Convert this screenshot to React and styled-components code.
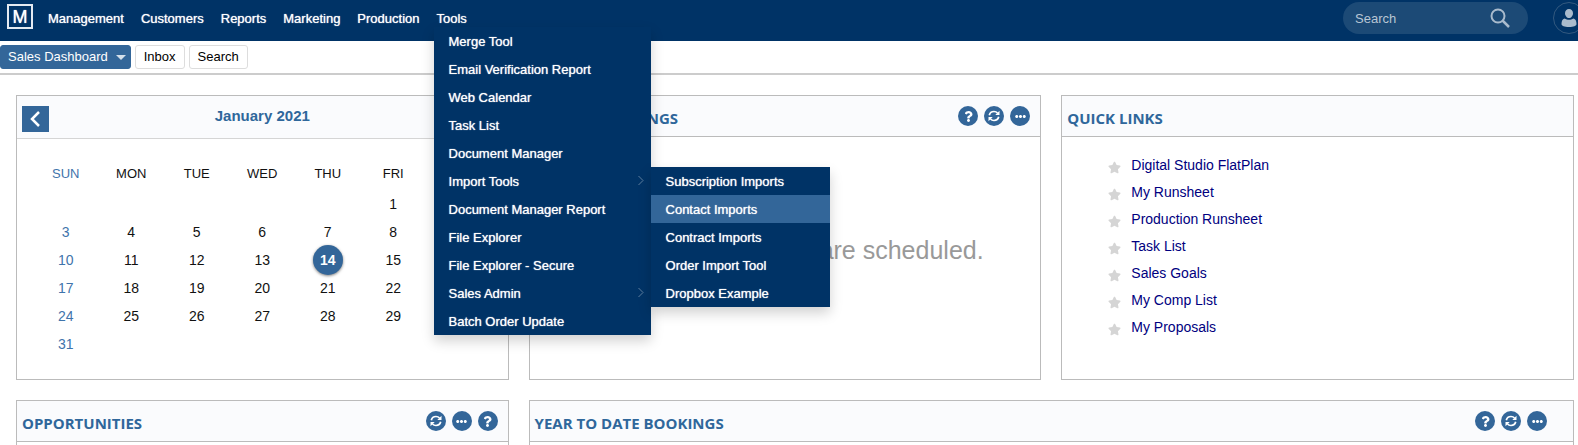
import styled, { createGlobalStyle } from "styled-components";
import { FaEllipsisH, FaQuestion, FaStar } from "react-icons/fa";

const GlobalStyle = createGlobalStyle`
  * {
    box-sizing: border-box;
  }

  body {
    margin: 0;
    overflow-x: hidden;
    background: #fff;
    color: #111;
    font-family: "Liberation Sans", Arial, sans-serif;
    font-size: 13px;
    line-height: 16px;
  }

  button,
  input {
    font: inherit;
  }

  ul {
    list-style: none;
    margin: 0;
    padding: 0;
  }
`;

const Header = styled.header`
  display: flex;
  height: 41px;
  padding-left: 7px;
  background: #003366;
`;

const Logo = styled.a`
  display: flex;
  align-items: center;
  justify-content: center;
  width: 26px;
  height: 25px;
  margin: 4px 7px 0 0;
  border: 2px solid #e4eaf1;
  color: #fff;
  font-size: 18px;
  text-decoration: none;
  text-shadow: 0 0 1px #fff;
`;

const NavList = styled.ul`
  display: flex;
  gap: 1px;
`;

const NavItem = styled.li`
  position: relative;
  margin: 0 6px;
  padding: 11px 2px 0;
`;

const NavLink = styled.a`
  color: #fff;
  text-decoration: none;
  text-shadow: 0 0 1px rgba(255, 255, 255, 0.9);
`;

const Menu = styled.ul`
  position: absolute;
  z-index: 10;
  top: ${({ $nested }) => ($nested ? "0" : "27px")};
  left: ${({ $nested }) => ($nested ? "100%" : "-1px")};
  width: ${({ $nested }) => ($nested ? "179px" : "217px")};
  background: #003366;
  box-shadow: 0 6px 12px rgba(0, 0, 0, 0.18);
`;

const MenuItem = styled.li`
  position: relative;
`;

const MenuLink = styled(NavLink)`
  display: flex;
  align-items: center;
  justify-content: space-between;
  height: 28px;
  padding: 2px 6px 0 15px;
  background: ${({ $active }) => ($active ? "#336699" : "transparent")};

  svg {
    margin-bottom: 2px;
  }
`;

const HeaderTools = styled.div`
  display: flex;
  gap: 25px;
  margin: 2px -7px 0 auto;
`;

const SearchForm = styled.form`
  display: flex;
  align-items: center;
  width: 185px;
  height: 32px;
  padding: 0 18px 0 12px;
  border-radius: 16px;
  background: #1c4a76;
`;

const SearchInput = styled.input`
  flex: 1;
  min-width: 0;
  padding: 1px 0 0;
  border: 0;
  outline: 0;
  background: transparent;
  color: #fff;

  &::placeholder {
    color: #b8c6d4;
    opacity: 1;
  }
`;

const PlainButton = styled.button`
  display: flex;
  padding: 0;
  border: 0;
  background: transparent;
`;

const Avatar = styled.button`
  display: flex;
  align-items: center;
  justify-content: center;
  width: 32px;
  height: 32px;
  padding: 0;
  border: 1px solid #33597f;
  border-radius: 50%;
  background: transparent;
`;

const Toolbar = styled.div`
  display: flex;
  gap: 4px;
  padding: 4px 0;
  border-bottom: 2px solid #ccc;
`;

const Tab = styled.button`
  display: flex;
  align-items: center;
  gap: 8px;
  height: 24px;
  padding: 0 8px;
  border: 1px solid #ddd;
  border-radius: 3px;
  background: #fff;
  color: #000;
`;

const ActiveTab = styled(Tab)`
  padding: 0 4px 0 7px;
  border-color: #336699;
  background: #336699;
  color: #fff;
`;

const Dashboard = styled.main`
  display: grid;
  grid-template-columns: minmax(0, 49fr) minmax(0, 51fr) minmax(0, 51fr);
  gap: 20px;
  padding: 20px 4px 0 16px;
`;

const Panel = styled.section`
  grid-column: span ${({ $span = 1 }) => $span};
  border: 1px solid #bbb;
  background: #fff;
`;

const PanelHeader = styled.div`
  display: flex;
  align-items: flex-start;
  justify-content: space-between;
  height: 41px;
  padding: 10px ${({ $inset = 10 }) => $inset}px 0 5px;
  border-bottom: 1px solid #bbb;
  background: #fafbfd;
`;

const PanelTitle = styled.h2`
  margin: 2px 0 0;
  color: #2f679b;
  font-family: "Open Sans", sans-serif;
  font-size: 15px;
  font-weight: 700;
  line-height: 20px;
`;

const Actions = styled.div`
  display: flex;
  gap: 6px;
`;

const ActionButton = styled.button`
  display: flex;
  align-items: center;
  justify-content: center;
  width: 20px;
  height: 20px;
  padding: 0;
  border: 0;
  border-radius: 50%;
  background: #336699;
  color: #fff;
`;

const CalendarHeader = styled.div`
  display: grid;
  grid-template-columns: 27px 1fr 27px;
  height: 43px;
  padding: 10px 5px 0;
  border-bottom: 1px solid #d5d5d5;
  background: #fafbfd;
`;

const MonthTitle = styled.h2`
  margin: 0;
  color: #2f679b;
  font-size: 15px;
  line-height: 20px;
  text-align: center;
`;

const MonthButton = styled.button`
  display: flex;
  align-items: center;
  justify-content: center;
  height: 26px;
  padding: 0;
  border: 0;
  background: #336699;
`;

const CalendarBody = styled.div`
  padding: 18px 16px 21px;
`;

const CalendarTable = styled.table`
  width: 100%;
  table-layout: fixed;
  border-collapse: collapse;
  text-align: center;
`;

const Weekday = styled.th`
  height: 33px;
  padding: 0;
  color: ${({ $sunday }) => ($sunday ? "#3f74ab" : "#111")};
  font-weight: 400;
`;

const Day = styled.td`
  height: 28px;
  padding: 0;
  color: ${({ $sunday }) => ($sunday ? "#3f74ab" : "#111")};
  font-size: 14px;
`;

const Today = styled.span`
  display: block;
  width: 30px;
  height: 30px;
  margin: -1px auto;
  border-radius: 50%;
  background: #336699;
  box-shadow: 0 1px 3px rgba(0, 0, 0, 0.5);
  color: #fff;
  font-weight: 700;
  line-height: 30px;
`;

const EmptyMessage = styled.p`
  margin: 0;
  padding-top: 97px;
  color: #999;
  font-size: 25px;
  line-height: 32px;
  text-align: center;
`;

const LinkList = styled.ul`
  padding: 14px 0 0 46px;
`;

const LinkItem = styled.li`
  display: flex;
  align-items: center;
  gap: 10px;
  height: 27px;

  svg {
    margin-top: 6px;
    color: #d5d5d5;
  }

  a {
    color: #000080;
    font-size: 14px;
    text-decoration: none;
  }
`;

const PanelBody = styled.div`
  height: 60px;
`;

const navItems = ["Management", "Customers", "Reports", "Marketing", "Production"];

const importTools = [
  "Subscription Imports",
  "Contact Imports",
  "Contract Imports",
  "Order Import Tool",
  "Dropbox Example",
];

const toolsMenu = [
  { label: "Merge Tool" },
  { label: "Email Verification Report" },
  { label: "Web Calendar" },
  { label: "Task List" },
  { label: "Document Manager" },
  { label: "Import Tools", hasMenu: true, children: importTools },
  { label: "Document Manager Report" },
  { label: "File Explorer" },
  { label: "File Explorer - Secure" },
  { label: "Sales Admin", hasMenu: true },
  { label: "Batch Order Update" },
];

const quickLinks = [
  "Digital Studio FlatPlan",
  "My Runsheet",
  "Production Runsheet",
  "Task List",
  "Sales Goals",
  "My Comp List",
  "My Proposals",
];

const weekdays = ["SUN", "MON", "TUE", "WED", "THU", "FRI", "SAT"];

const weeks = [
  ["", "", "", "", "", 1, 2],
  [3, 4, 5, 6, 7, 8, 9],
  [10, 11, 12, 13, 14, 15, 16],
  [17, 18, 19, 20, 21, 22, 23],
  [24, 25, 26, 27, 28, 29, 30],
  [31, "", "", "", "", "", ""],
];

function SubmenuArrow() {
  return (
    <svg width="8" height="12" viewBox="0 0 8 12" fill="none" stroke="#5f7f9f">
      <path d="M1.5 1 6 5.5 1.5 10" />
    </svg>
  );
}

function SearchIcon() {
  return (
    <svg width="20" height="20" viewBox="0 0 20 20" fill="none" stroke="#a9bbcd">
      <circle cx="8" cy="8" r="6.5" strokeWidth="2" />
      <path d="M12.5 12.5 19 19" strokeWidth="2.5" />
    </svg>
  );
}

function UserIcon() {
  return (
    <svg width="16" height="20" viewBox="0 0 16 20" fill="#a9bbcd">
      <path d="M8 1c2.4 0 4 1.7 4 4.2S10.200 10 8 10 4 7.700 4 5.200 5.600 1 8 1Z" />
      <path d="M3.500 10.500C5 11.500 6.500 11.800 8 11.800s3-.3 4.500-1.300C14.500 11 15.500 13 15.500 16c0 2-3 3-7.500 3S.5 18 .5 16c0-3 1-5 3-5.500Z" />
    </svg>
  );
}

function RefreshIcon() {
  return (
    <svg width="12" height="12" viewBox="0 0 12 12" fill="none" stroke="#fff" strokeWidth="1.7">
      <path d="M1.3 5.2C1.8 3 3.7 1.5 6 1.5c1.4 0 2.6.5 3.5 1.5M10.7 6.8C10.2 9 8.3 10.5 6 10.5 4.6 10.5 3.4 10 2.5 9" />
      <path d="M11.500.8v4.200H7.300ZM.5 11.200V7h4.200Z" fill="#fff" stroke="none" />
    </svg>
  );
}

const actionIcons = {
  Help: <FaQuestion size={11} />,
  Refresh: <RefreshIcon />,
  More: <FaEllipsisH size={11} />,
};

function PanelActions({ actions }) {
  return (
    <Actions>
      {actions.map((name) => (
        <ActionButton key={name} type="button" aria-label={name}>
          {actionIcons[name]}
        </ActionButton>
      ))}
    </Actions>
  );
}

function ToolsMenu() {
  return (
    <Menu>
      {toolsMenu.map(({ label, hasMenu, children }) => (
        <MenuItem key={label}>
          <MenuLink href="#">
            {label}
            {hasMenu && <SubmenuArrow />}
          </MenuLink>
          {children && (
            <Menu $nested>
              {children.map((child) => (
                <MenuItem key={child}>
                  <MenuLink href="#" $active={child === "Contact Imports"}>
                    {child}
                  </MenuLink>
                </MenuItem>
              ))}
            </Menu>
          )}
        </MenuItem>
      ))}
    </Menu>
  );
}

function Calendar() {
  return (
    <Panel>
      <CalendarHeader>
        <MonthButton type="button" aria-label="Previous month">
          <svg width="12" height="18" viewBox="0 0 12 18" fill="none" stroke="#fff" strokeWidth="2.5">
            <path d="M9 2 2 9l7 7" />
          </svg>
        </MonthButton>
        <MonthTitle>January 2021</MonthTitle>
        <MonthButton type="button" aria-label="Next month">
          <svg width="12" height="18" viewBox="0 0 12 18" fill="none" stroke="#fff" strokeWidth="2.5">
            <path d="m3 2 7 7-7 7" />
          </svg>
        </MonthButton>
      </CalendarHeader>
      <CalendarBody>
        <CalendarTable>
          <thead>
            <tr>
              {weekdays.map((name) => (
                <Weekday key={name} $sunday={name === "SUN"}>
                  {name}
                </Weekday>
              ))}
            </tr>
          </thead>
          <tbody>
            {weeks.map((week, row) => (
              <tr key={row}>
                {week.map((day, col) => (
                  <Day key={col} $sunday={col === 0}>
                    {day === 14 ? <Today>{day}</Today> : day}
                  </Day>
                ))}
              </tr>
            ))}
          </tbody>
        </CalendarTable>
      </CalendarBody>
    </Panel>
  );
}

function App() {
  return (
    <>
      <GlobalStyle />
      <Header>
        <Logo href="#">M</Logo>
        <nav>
          <NavList>
            {navItems.map((item) => (
              <NavItem key={item}>
                <NavLink href="#">{item}</NavLink>
              </NavItem>
            ))}
            <NavItem>
              <NavLink href="#">Tools</NavLink>
              <ToolsMenu />
            </NavItem>
          </NavList>
        </nav>
        <HeaderTools>
          <SearchForm>
            <SearchInput type="text" placeholder="Search" aria-label="Search" />
            <PlainButton type="button" aria-label="Submit search">
              <SearchIcon />
            </PlainButton>
          </SearchForm>
          <Avatar type="button" aria-label="Account">
            <UserIcon />
          </Avatar>
        </HeaderTools>
      </Header>
      <Toolbar>
        <ActiveTab type="button">
          Sales Dashboard
          <svg width="10" height="5" viewBox="0 0 10 5" fill="#d5e0eb">
            <path d="M0 0h10L5 5Z" />
          </svg>
        </ActiveTab>
        <Tab type="button">Inbox</Tab>
        <Tab type="button">Search</Tab>
      </Toolbar>
      <Dashboard>
        <Calendar />
        <Panel>
          <PanelHeader>
            <PanelTitle>TODAY'S MEETINGS</PanelTitle>
            <PanelActions actions={["Help", "Refresh", "More"]} />
          </PanelHeader>
          <EmptyMessage>No meetings or calls are scheduled.</EmptyMessage>
        </Panel>
        <Panel>
          <PanelHeader>
            <PanelTitle>QUICK LINKS</PanelTitle>
          </PanelHeader>
          <LinkList>
            {quickLinks.map((link) => (
              <LinkItem key={link}>
                <FaStar size={13} />
                <a href="#">{link}</a>
              </LinkItem>
            ))}
          </LinkList>
        </Panel>
        <Panel>
          <PanelHeader>
            <PanelTitle>OPPORTUNITIES</PanelTitle>
            <PanelActions actions={["Refresh", "More", "Help"]} />
          </PanelHeader>
          <PanelBody />
        </Panel>
        <Panel $span={2}>
          <PanelHeader $inset={26}>
            <PanelTitle>YEAR TO DATE BOOKINGS</PanelTitle>
            <PanelActions actions={["Help", "Refresh", "More"]} />
          </PanelHeader>
          <PanelBody />
        </Panel>
      </Dashboard>
    </>
  );
}

export default App;
